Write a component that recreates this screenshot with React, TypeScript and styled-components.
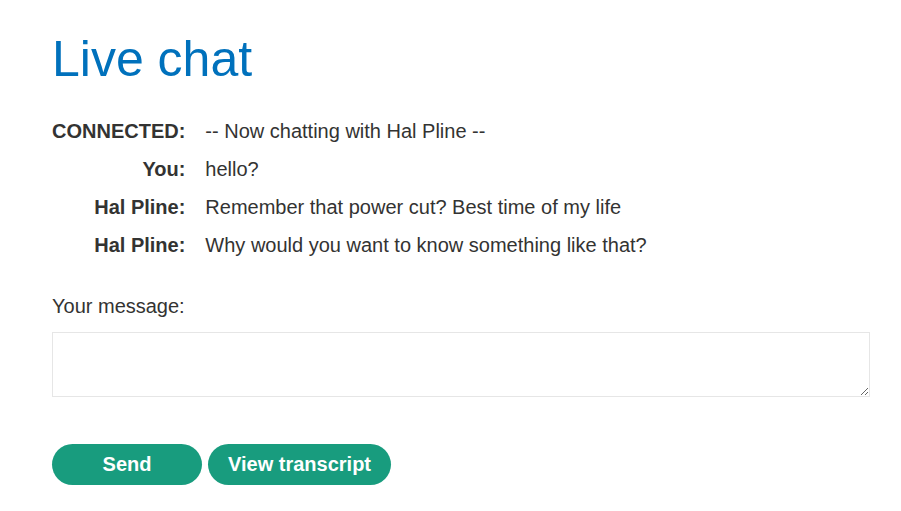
import React from "react";
import styled, { createGlobalStyle } from "styled-components";

const GlobalStyle = createGlobalStyle`
  html, body {
    margin: 0;
    padding: 0;
    background: #ffffff;
  }
  body {
    font-family: "Liberation Sans", Arial, Helvetica, sans-serif;
    color: #333332;
  }
`;

const Page = styled.main`
  box-sizing: border-box;
  width: 901px;
  padding: 29px 31px 0 52px;
`;

const Title = styled.h1`
  margin: 0;
  font-size: 50px;
  line-height: 60px;
  font-weight: 400;
  color: #0071bc;
`;

const ChatTable = styled.div`
  display: grid;
  grid-template-columns: max-content 1fr;
  column-gap: 20px;
  margin-top: 23px;
`;

const Label = styled.span`
  font-size: 20px;
  line-height: 38px;
  font-weight: 700;
  text-align: right;
`;

const Message = styled.span`
  font-size: 20px;
  line-height: 38px;
`;

const Form = styled.form`
  display: flex;
  flex-direction: column;
  margin-top: 30px;
`;

const FieldLabel = styled.label`
  font-size: 20px;
  line-height: 24px;
`;

const TextArea = styled.textarea`
  box-sizing: border-box;
  width: 818px;
  height: 65px;
  margin-top: 14px;
  border: 1px solid #e6e6e6;
  border-radius: 0;
  font-family: inherit;
  font-size: 16px;
  padding: 6px;
  outline: none;
  resize: both;
`;

const Buttons = styled.div`
  display: flex;
  gap: 6px;
  margin-top: 47px;
`;

const Button = styled.button<{ $minWidth?: number }>`
  box-sizing: border-box;
  height: 41px;
  min-width: ${(p) => (p.$minWidth ? `${p.$minWidth}px` : "auto")};
  padding: 0 20px;
  border: none;
  border-radius: 21px;
  background: #189c7e;
  color: #ffffff;
  font-family: "Liberation Sans", Arial, Helvetica, sans-serif;
  font-size: 20px;
  font-weight: 700;
  cursor: pointer;
`;

const rows: [string, string][] = [
  ["CONNECTED:", "-- Now chatting with Hal Pline --"],
  ["You:", "hello?"],
  ["Hal Pline:", "Remember that power cut? Best time of my life"],
  ["Hal Pline:", "Why would you want to know something like that?"],
];

export default function App() {
  return (
    <>
      <GlobalStyle />
      <Page>
        <Title>Live chat</Title>
        <ChatTable>
          {rows.map(([who, text], i) => (
            <React.Fragment key={i}>
              <Label>{who}</Label>
              <Message>{text}</Message>
            </React.Fragment>
          ))}
        </ChatTable>
        <Form onSubmit={(e) => e.preventDefault()}>
          <FieldLabel htmlFor="msg">Your message:</FieldLabel>
          <TextArea id="msg" />
          <Buttons>
            <Button type="submit" $minWidth={150}>Send</Button>
            <Button type="button">View transcript</Button>
          </Buttons>
        </Form>
      </Page>
    </>
  );
}
